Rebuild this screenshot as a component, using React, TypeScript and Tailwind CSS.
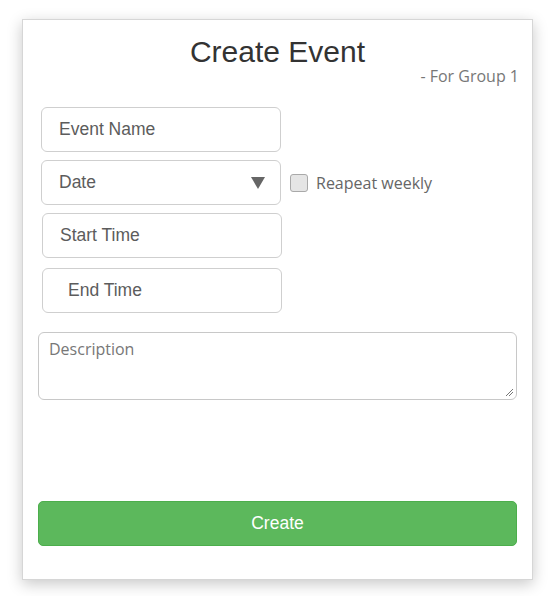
export default function App() {
  return (
    <div className="min-h-screen bg-white pt-[19px] pl-[22px]">
      <div className="flex h-[561px] w-[511px] flex-col border border-[#d6d6d6] bg-white shadow-[0_4px_14px_rgba(0,0,0,0.22)]">
        {/* Header */}
        <h1 className="mt-[15px] text-center font-['Liberation_Sans',Arial,sans-serif] text-[30px] leading-[33px] text-[#333]">
          Create Event
        </h1>
        <p className="-mt-[3px] pr-[13px] text-right font-['Open_Sans',sans-serif] text-[16px] leading-[22px] text-[#777]">
          - For Group 1
        </p>

        {/* Fields */}
        <div className="mt-[20px] flex flex-col pl-[18px] font-['Liberation_Sans',Arial,sans-serif] text-[17.5px] text-[#5c5c5c]">
          <div className="flex h-[45px] w-[240px] items-center rounded-[6px] border border-[#cfcfcf] pl-[17px]">
            Event Name
          </div>
          <div className="mt-[8px] flex items-center">
            <div className="flex h-[45px] w-[240px] items-center justify-between rounded-[6px] border border-[#cfcfcf] pl-[17px] pr-[15px]">
              <span>Date</span>
              <svg width="14" height="12" viewBox="0 0 14 12">
                <path d="M0 0 L14 0 L7 12 Z" fill="#666" />
              </svg>
            </div>
            <label className="ml-[9px] flex items-center gap-[8px] font-['Open_Sans',sans-serif] text-[16px] text-[#666]">
              <span className="inline-block h-[18px] w-[18px] rounded-[3px] border border-[#a9a9a9] bg-[#e5e5e5]" />
              Reapeat weekly
            </label>
          </div>
          <div className="ml-[1px] mt-[8px] flex h-[45px] w-[240px] items-center rounded-[6px] border border-[#cfcfcf] pl-[17px]">
            Start Time
          </div>
          <div className="ml-[1px] mt-[10px] flex h-[45px] w-[240px] items-center rounded-[6px] border border-[#cfcfcf] pl-[25px]">
            End Time
          </div>
        </div>

        {/* Description */}
        <div className="relative ml-[15px] mt-[19px] h-[68px] w-[479px] rounded-[6px] border border-[#c8c8c8] px-[10px] pt-[5px] font-['Open_Sans',sans-serif] text-[16px] leading-[22px] text-[#777]">
          Description
          <svg className="absolute bottom-[2px] right-[2px]" width="9" height="9" viewBox="0 0 9 9">
            <path d="M1 8 L8 1 M4 8 L8 4" stroke="#777" strokeWidth="1" />
          </svg>
        </div>

        {/* Submit */}
        <button className="ml-[15px] mt-[101px] flex h-[45px] w-[479px] items-center justify-center rounded-[5px] border border-[#4cae4c] bg-[#5cb85c] font-['Liberation_Sans',Arial,sans-serif] text-[17.5px] text-white">
          Create
        </button>
      </div>
    </div>
  )
}
